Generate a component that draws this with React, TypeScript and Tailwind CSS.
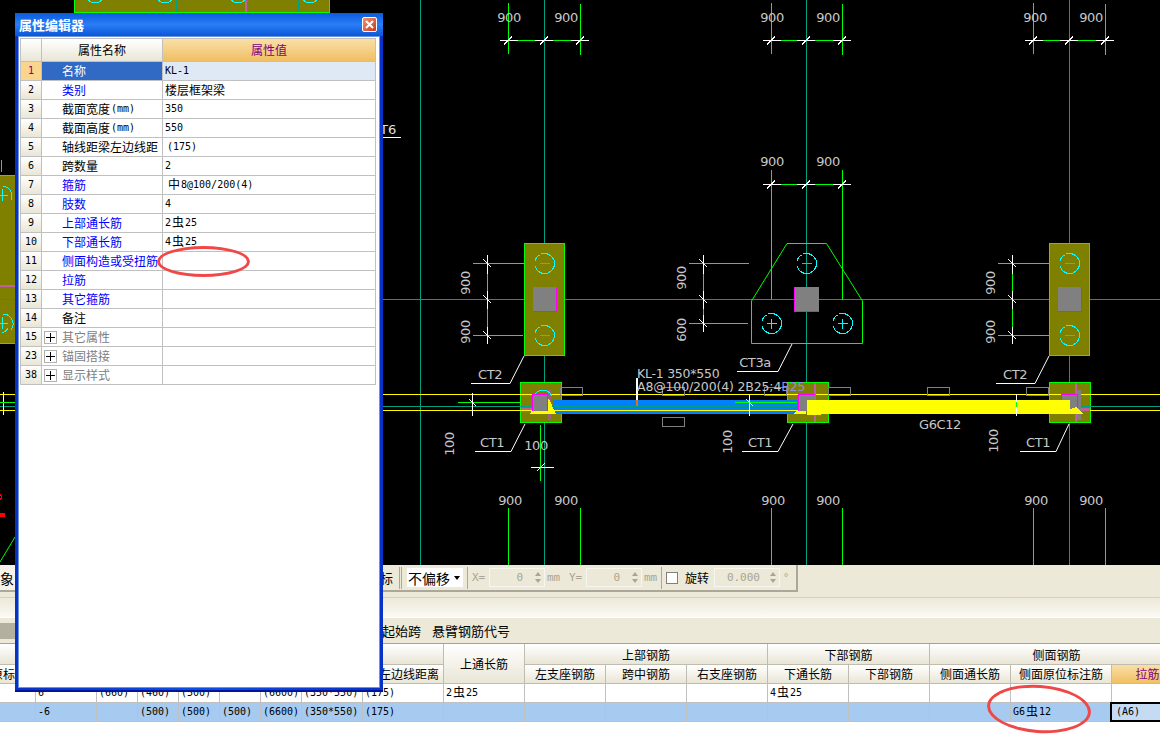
const mono = "font-['DejaVu_Sans_Mono','Noto_Sans_CJK_SC',monospace] text-[10px]";
const headBg = "bg-gradient-to-b from-[#ffffff] to-[#e9e6d6]";
const orangeBg = "bg-gradient-to-b from-[#f9dfa6] to-[#f0bf62]";

// 属性编辑器 rows
const rows = [
  { n: "1", name: "名称", value: "KL-1", sel: true },
  { n: "2", name: "类别", value: "楼层框架梁", blue: true, cjk: true },
  { n: "3", name: "截面宽度", unit: "(mm)", value: "350" },
  { n: "4", name: "截面高度", unit: "(mm)", value: "550" },
  { n: "5", name: "轴线距梁左边线距", value: "(175)", indent: true },
  { n: "6", name: "跨数量", value: "2" },
  { n: "7", name: "箍筋", value: "中8@100/200(4)", blue: true, indent: true },
  { n: "8", name: "肢数", value: "4", blue: true },
  { n: "9", name: "上部通长筋", value: "2虫25", blue: true },
  { n: "10", name: "下部通长筋", value: "4虫25", blue: true },
  { n: "11", name: "侧面构造或受扭筋", value: "", blue: true },
  { n: "12", name: "拉筋", value: "", blue: true },
  { n: "13", name: "其它箍筋", value: "", blue: true },
  { n: "14", name: "备注", value: "" },
  { n: "15", name: "其它属性", value: "", group: true },
  { n: "23", name: "锚固搭接", value: "", group: true },
  { n: "38", name: "显示样式", value: "", group: true },
];

const row1 = ["", "6", "(660)", "(460)", "(500)", "", "(6600)", "(350*550)", "(175)", "2虫25", "", "", "", "4虫25", "", "", "", ""];
const row2 = ["", "-6", "", "(500)", "(500)", "(500)", "(6600)", "(350*550)", "(175)", "", "", "", "", "", "", "", "G6虫12", ""];

// rebar grade glyphs sit a bit larger than the digits next to them
function Rebar({ text }: { text: string }) {
  const parts = text.split(/([中虫])/);
  return (
    <>
      {parts.map((p, i) =>
        p === "中" || p === "虫" ? (
          <span key={i} className="text-[12px] mx-[1px]">{p}</span>
        ) : (
          <span key={i}>{p}</span>
        ),
      )}
    </>
  );
}

function HDim({ y, xs }: { y: number; xs: number[] }) {
  return (
    <g>
      <line x1={xs[0] - 8} x2={xs[2] + 9} y1={y} y2={y} stroke="#fff" />
      <line x1={xs[0] + 10} x2={xs[1] - 9} y1={y} y2={y} stroke="#00ff00" />
      <line x1={xs[1] + 9} x2={xs[2] - 9} y1={y} y2={y} stroke="#00ff00" />
      {xs.map((x) => (
        <line key={x} x1={x - 4} y1={y + 4} x2={x + 4} y2={y - 4} stroke="#fff" />
      ))}
    </g>
  );
}

function VDim({ x, ys }: { x: number; ys: number[] }) {
  return (
    <g>
      <line x1={x} x2={x} y1={ys[0] - 9} y2={ys[2] + 8} stroke="#fff" />
      <line x1={x} x2={x} y1={ys[0] + 10} y2={ys[1] - 9} stroke="#00ff00" />
      <line x1={x} x2={x} y1={ys[1] + 9} y2={ys[2] - 9} stroke="#00ff00" />
      {ys.map((y) => (
        <line key={y} x1={x - 4} y1={y - 4} x2={x + 4} y2={y + 4} stroke="#fff" />
      ))}
    </g>
  );
}

function Label({ x, y, children, rotate }: { x: number; y: number; children: string; rotate?: boolean }) {
  return (
    <text
      x={x}
      y={y}
      textAnchor="middle"
      dominantBaseline="central"
      fill="#c8c8c8"
      fontSize={13}
      letterSpacing={-0.4}
      fontFamily="'DejaVu Sans', sans-serif"
      transform={rotate ? `rotate(-90 ${x} ${y})` : undefined}
    >
      {children}
    </text>
  );
}

function Bolt({ x, y, minus }: { x: number; y: number; minus?: boolean }) {
  return (
    <g>
      <path
        d={`M${x - 3} ${y - 9.5} A10 10 0 1 1 ${x - 9.5} ${y + 3} M${x - 9.5} ${y - 3} A10 10 0 0 1 ${x - 5} ${y - 8.6} M${x - 8} ${y + 6} A10 10 0 0 0 ${x - 3} ${y + 9.5}`}
        fill="none"
        stroke="#00ffff"
      />
      <line x1={x - 5} x2={x + 5} y1={y} y2={y} stroke={minus ? "#00d8a0" : "#00ffff"} />
      {!minus && <line x1={x} x2={x} y1={y - 5} y2={y + 5} stroke="#00ffff" />}
    </g>
  );
}

function Ct2({ x }: { x: number }) {
  return (
    <g>
      <rect x={x} y={243.5} width={40} height={112} fill="#808000" stroke="#00ff00" />
      <rect x={x + 8} y={287} width={24} height={24} fill="#808080" />
      <path d={`M${x + 32} 287 V311 H${x + 8}`} fill="none" stroke="#ff00ff" />
      <Bolt x={x + 20} y={263.5} minus />
      <Bolt x={x + 20} y={335.5} minus />
    </g>
  );
}

function Ct1({ x }: { x: number }) {
  return (
    <rect x={x} y={382.5} width={40.5} height={40} fill="#808000" stroke="#00ff00" />
  );
}

function CadCanvas() {
  const gridX = [420.5, 544.5, 806.5, 1069.5];
  const top = [[508, 544, 580], [771, 806, 842], [1033, 1069, 1105]];
  const labelsX = [[509, 566], [772, 828], [1035, 1091]];
  const boxes = [[560, 387], [662, 387], [764, 387], [828, 387], [927, 387], [1026, 387], [662, 417]];
  return (
    <svg width={1160} height={565} viewBox="0 0 1160 565" className="block bg-black" shapeRendering="crispEdges">
      {/* top-left footing, mostly under the dialog */}
      <rect x={74.5} y={-5} width={255} height={17.5} fill="#808000" stroke="#00ff00" />
      <line x1={176.5} x2={176.5} y1={0} y2={12} stroke="#00a080" />
      <line x1={245.5} x2={245.5} y1={0} y2={12} stroke="#c060a0" strokeWidth={2} />
      <line x1={298} x2={298} y1={0} y2={12} stroke="#00a080" />
      <path d="M88 0 A10 10 0 0 0 102 0 M158 0 A10 10 0 0 0 172 0 M231 0 A10 10 0 0 0 245 0 M303 0 A10 10 0 0 0 317 0" fill="none" stroke="#00ffff" />

      {/* left footing */}
      <rect x={-5} y={175.5} width={24} height={168} fill="#808000" stroke="#00ff00" />
      <rect x={0} y={285} width={20} height={2} fill="#c060a0" />
      <line x1={1.5} x2={1.5} y1={160} y2={172} stroke="#00ff00" />
      <path d="M3 186 A10 10 0 0 1 11 200 M3 314 A10 10 0 0 1 11 330 M8 328 A10 10 0 0 1 2 333" fill="none" stroke="#00ffff" />
      <path d="M-3 195 H8 M2 189 V201 M-3 323 H8 M2 317 V329" stroke="#00ffff" />

      {gridX.map((x) => (
        <line key={x} x1={x} x2={x} y1={0} y2={565} stroke="#00a080" />
      ))}
      <line x1={0} x2={1160} y1={299.5} y2={299.5} stroke="#00a080" />

      {top.map((xs, i) => (
        <g key={i}>
          <line x1={xs[0] + 0.5} x2={xs[0] + 0.5} y1={3} y2={54} stroke="#00ff00" />
          <line x1={xs[2] + 0.5} x2={xs[2] + 0.5} y1={4} y2={55} stroke="#00ff00" />
          <HDim y={40.5} xs={xs} />
          <Label x={labelsX[i][0]} y={17}>900</Label>
          <Label x={labelsX[i][1]} y={17}>900</Label>
          <line x1={xs[0] + 0.5} x2={xs[0] + 0.5} y1={508} y2={565} stroke="#00ff00" />
          <line x1={xs[2] + 0.5} x2={xs[2] + 0.5} y1={508} y2={565} stroke="#00ff00" />
          <Label x={labelsX[i][0] + 1} y={500}>900</Label>
          <Label x={labelsX[i][1]} y={500}>900</Label>
        </g>
      ))}

      {/* second dimension row above CT3a */}
      <line x1={771.5} x2={771.5} y1={170} y2={299} stroke="#00ff00" />
      <line x1={842.5} x2={842.5} y1={170} y2={300} stroke="#00ff00" />
      <HDim y={184.5} xs={[771, 806, 842]} />
      <Label x={772} y={161}>900</Label>
      <Label x={828} y={161}>900</Label>

      <Ct2 x={524.5} />
      <Ct2 x={1049.5} />

      {/* CT3a */}
      <path d="M787 243.5 H826.5 L862.5 301 V343.5 H751.5 V301 Z" fill="none" stroke="#00ff00" shapeRendering="auto" />
      <rect x={794} y={287} width={25} height={24} fill="#808080" />
      <path d="M794.5 287 V311 H819" fill="none" stroke="#ff00ff" />
      <Bolt x={806.5} y={263.5} minus />
      <Bolt x={771.5} y={323.5} />
      <Bolt x={842.5} y={323.5} />

      {/* vertical dims */}
      <line x1={473} x2={524} y1={263.5} y2={263.5} stroke="#00ff00" />
      <line x1={473} x2={523} y1={335.5} y2={335.5} stroke="#00ff00" />
      <VDim x={487.5} ys={[263.5, 299.5, 335.5]} />
      <Label x={465} y={283} rotate>900</Label>
      <Label x={465} y={332} rotate>900</Label>

      <line x1={689} x2={749} y1={263.5} y2={263.5} stroke="#00ff00" />
      <line x1={689} x2={748} y1={323.5} y2={323.5} stroke="#00ff00" />
      <VDim x={703.5} ys={[263.5, 299.5, 323.5]} />
      <Label x={681} y={278} rotate>900</Label>
      <Label x={681} y={330} rotate>600</Label>

      <line x1={998} x2={1049} y1={263.5} y2={263.5} stroke="#00ff00" />
      <line x1={998} x2={1049} y1={335.5} y2={335.5} stroke="#00ff00" />
      <VDim x={1012.5} ys={[263.5, 299.5, 335.5]} />
      <Label x={990} y={283} rotate>900</Label>
      <Label x={990} y={332} rotate>900</Label>

      {/* leaders */}
      <g fill="none" stroke="#fff" shapeRendering="auto">
        <path d="M524 356 L510 383.5 H471" />
        <path d="M525 424 L511 451.5 H475" />
        <path d="M792 344 L778 371.5 H737" />
        <path d="M793 424 L778 451.5 H742" />
        <path d="M1049 356 L1035 383.5 H996" />
        <path d="M1069 424 L1056 451.5 H1020" />
      </g>
      <Label x={490} y={374}>CT2</Label>
      <Label x={492} y={442}>CT1</Label>
      <Label x={755} y={362}>CT3a</Label>
      <Label x={760} y={442}>CT1</Label>
      <Label x={1015} y={374}>CT2</Label>
      <Label x={1038} y={442}>CT1</Label>

      <Ct1 x={520.5} />
      <Ct1 x={787.5} />
      <Ct1 x={1049.5} />

      {/* beams */}
      <rect x={553} y={400} width={247} height={14} fill="#0080ff" />
      <line x1={0} x2={1160} y1={406.5} y2={406.5} stroke="#00a080" />
      <line x1={0} x2={1160} y1={394.5} y2={394.5} stroke="#ffff00" />
      <line x1={0} x2={1160} y1={410.5} y2={410.5} stroke="#ffff00" />
      <rect x={1077} y={390} width={4} height={30} fill="#808080" />
      <rect x={548} y={390} width={3} height={30} fill="#a06080" />
      <rect x={814} y={383} width={2} height={39} fill="#c060a0" />
      <rect x={1075} y={383} width={2} height={39} fill="#c060a0" />
      <rect x={521} y={408} width={11} height={2} fill="#c06090" />
      <rect x={1081} y={408} width={9} height={3} fill="#c06090" />

      <polygon points="530,414 556,414 549,399 536,399" fill="#ffff00" />
      <path d="M534 396 A10 10 0 0 1 552 396" fill="none" stroke="#00ffff" />
      <rect x={532} y={394} width={16} height={17} fill="#808080" />
      <path d="M532.5 411 V394.5 H547.5 V411" fill="none" stroke="#ff00ff" />

      <polygon points="793,414 806,414 806,402" fill="#ffff00" />
      <rect x={799} y={394} width={16} height={17} fill="#808080" />
      <path d="M798.5 411 V394.5 H815" fill="none" stroke="#ff00ff" />
      <rect x={807} y={400} width={263} height={14} fill="#ffff00" />
      <rect x={807} y={414} width={14} height={1} fill="#ffff00" />

      <rect x={1061} y={394} width={17} height={17} fill="#808080" />
      <path d="M1061.5 411 V394.5 H1077.5 V411" fill="none" stroke="#ff00ff" />
      <polygon points="1055,414 1084,414 1076,407" fill="#ffff00" />
      <rect x={1049} y={400} width={21} height={14} fill="#ffff00" />

      {/* gray rebar tag boxes */}
      {boxes.map(([x, y]) => (
        <rect key={`${x}-${y}`} x={x + 0.5} y={y + 0.5} width={22} height={y === 417 ? 9 : 8} fill="none" stroke="#808080" />
      ))}

      {/* span marks */}
      <line x1={458} x2={520} y1={402.5} y2={402.5} stroke="#00ff00" />
      <line x1={472.5} x2={472.5} y1={393} y2={416} stroke="#fff" />
      <line x1={469} y1={399} x2={476} y2={406} stroke="#fff" />
      <line x1={735} x2={797} y1={402.5} y2={402.5} stroke="#00ff00" />
      <line x1={749.5} x2={749.5} y1={394} y2={416} stroke="#fff" />
      <line x1={746} y1={399} x2={753} y2={406} stroke="#fff" />
      <line x1={1016.5} x2={1016.5} y1={394} y2={416} stroke="#fff" />
      <line x1={1016.5} x2={1016.5} y1={402} y2={407} stroke="#00ff00" />
      <line x1={540.5} x2={540.5} y1={425} y2={481} stroke="#00ff00" />
      <line x1={531} x2={554} y1={467.5} y2={467.5} stroke="#fff" />
      <line x1={537} y1={471} x2={545} y2={463} stroke="#fff" />
      <Label x={536} y={445}>100</Label>
      <Label x={449} y={444} rotate>100</Label>
      <Label x={727} y={442} rotate>100</Label>
      <Label x={993} y={441} rotate>100</Label>

      {/* beam label */}
      <rect x={635.5} y={378} width={2} height={22} fill="#fff" />
      <rect x={635.5} y={400} width={2} height={6} fill="#e07020" />
      <text x={637} y={378} fill="#c8c8c8" fontSize={12.5} fontFamily="'DejaVu Sans', sans-serif" letterSpacing={-0.25}>KL-1 350*550</text>
      <text x={637} y={391} fill="#c8c8c8" fontSize={12.5} fontFamily="'DejaVu Sans', sans-serif" letterSpacing={-0.15}>A8@100/200(4) 2B25;4<tspan fill="#9090e0">B25</tspan></text>
      <Label x={940} y={424}>G6C12</Label>

      {/* T6 fragment and left-edge bits */}
      <text x={380} y={134} fill="#e0e0e0" fontSize={13} fontFamily="'DejaVu Sans', sans-serif">T6</text>
      <line x1={383} x2={401} y1={137.5} y2={137.5} stroke="#fff" />
      <line x1={3.5} x2={3.5} y1={392} y2={415} stroke="#fff" />
      <line x1={0} x2={15} y1={402.5} y2={402.5} stroke="#00ff00" />
      <path d="M0 494 L2 497 L0 500" fill="none" stroke="#ff0000" />
      <rect x={0} y={513} width={5} height={4} fill="#ff0000" />
      <line x1={0} y1={562} x2={15} y2={537} stroke="#00ff00" shapeRendering="auto" />
    </svg>
  );
}

function Spin({ w, value, decimal }: { w: string; value: string; decimal?: boolean }) {
  return (
    <div className={`${w} h-[19px] border border-[#f7f6ef] flex items-center justify-end text-[#a8a594] font-['DejaVu_Sans_Mono',monospace] text-[11px]`}>
      <span className={decimal ? "mr-[7px]" : "mr-[9px]"}>{value}</span>
      <div className="flex flex-col items-center gap-[3px] w-[11px] mr-[1px]">
        <span className="w-0 h-0 border-x-[3px] border-x-transparent border-b-[4px] border-b-[#a8a594]" />
        <span className="w-0 h-0 border-x-[3px] border-x-transparent border-t-[4px] border-t-[#a8a594]" />
      </div>
    </div>
  );
}

function Toolbar() {
  return (
    <div className="h-[33px] bg-[#ece9d8] border-b border-[#d4d0c0] shrink-0">
      <div className="h-[27px] w-[798px] flex items-center border-b-2 border-r-2 border-[#aca899] text-[12px] text-[#a8a594]">
        <div className="w-[40px] h-full flex items-center bg-[#f6f4ea] text-[14px] text-black">象</div>
        <span className="ml-[340px] text-[13px] text-black w-[11px]">标</span>
        <span className="ml-[8px] w-[3px] h-[22px] border-x border-[#aca899]" />
        <div className="ml-[5px] w-[56px] h-[19px] bg-white flex items-center text-[14px] text-black">
          <span className="pl-[1px] w-[46px]">不偏移</span>
          <span className="ml-[1px] w-0 h-0 border-x-[3px] border-x-transparent border-t-[4px] border-t-black" />
        </div>
        <span className="ml-[4px] w-px h-[22px] bg-[#aca899]" />
        <span className={`ml-[4px] w-[17px] ${mono} text-[11px]`}>X=</span>
        <Spin w="w-[56px]" value="0" />
        <span className={`ml-[2px] w-[22px] ${mono} text-[11px]`}>mm</span>
        <span className={`w-[17px] ${mono} text-[11px]`}>Y=</span>
        <Spin w="w-[56px]" value="0" />
        <span className={`ml-[2px] w-[17px] ${mono} text-[11px]`}>mm</span>
        <span className="w-px h-[22px] bg-[#aca899]" />
        <span className="ml-[4px] w-[12px] h-[12px] bg-white border border-[#7f7f7f]" />
        <span className="ml-[7px] w-[29px] text-[12px] text-black">旋转</span>
        <Spin w="w-[66px]" value="0.000" decimal />
        <span className={`ml-[3px] ${mono}`}>°</span>
      </div>
    </div>
  );
}

function BottomTable() {
  const grid = "grid grid-cols-[36px_61px_41px_41px_41px_41px_41px_61px_81px_81px_81px_81px_81px_81px_81px_81px_101px_72px]";
  const cell = "border-r border-b border-[#c0bdb0] flex items-center justify-center whitespace-nowrap overflow-hidden";
  const sub = ["左支座钢筋", "跨中钢筋", "右支座钢筋", "下通长筋", "下部钢筋", "侧面通长筋", "侧面原位标注筋"];
  return (
    <div className="flex-1 bg-white overflow-hidden">
      <div className={`${grid} h-[41px] text-[12px] text-black border-t border-[#8fa5bd] grid-rows-[21px_19px]`}>
        <div className={`${cell} ${headBg} col-span-8 row-start-2 col-start-1 justify-start`}><span className="-ml-[9px]">原标</span></div>
        <div className={`${cell} ${headBg} col-span-8 row-start-1 col-start-1`} />
        <div className={`${cell} ${headBg} row-start-2 col-start-9 justify-end pr-[4px]`}>左边线距离</div>
        <div className={`${cell} ${headBg} row-start-1 col-start-9`} />
        <div className={`${cell} ${headBg} row-span-2 row-start-1 col-start-10`}>上通长筋</div>
        <div className={`${cell} ${headBg} col-span-3 row-start-1 col-start-11 pt-px`}>上部钢筋</div>
        <div className={`${cell} ${headBg} col-span-2 row-start-1 col-start-14 pt-px`}>下部钢筋</div>
        <div className={`${cell} ${headBg} col-span-3 row-start-1 col-start-16 pt-px`}>侧面钢筋</div>
        {sub.map((t, i) => (
          <div key={t + i} className={`${cell} ${headBg} row-start-2`}>{t}</div>
        ))}
        <div className={`${cell} ${orangeBg} row-start-2 text-[#800080]`}>拉筋</div>
      </div>
      <div className={`${grid} h-[19px] ${mono} text-black`}>
        {row1.map((t, i) => (
          <div key={i} className="border-r border-b border-[#c0c0c0] flex items-center pl-[2px] whitespace-nowrap overflow-hidden"><Rebar text={t} /></div>
        ))}
      </div>
      <div className={`${grid} h-[19px] ${mono} text-black bg-[#a6caf0]`}>
        {row2.map((t, i) => (
          <div key={i} className="border-r border-b border-[#c0c0c0] flex items-center pl-[2px] whitespace-nowrap overflow-hidden"><Rebar text={t} /></div>
        ))}
      </div>
    </div>
  );
}

function PropertyDialog() {
  return (
    <div className="absolute left-[15px] top-[13px] w-[368px] h-[679px] flex flex-col bg-gradient-to-r from-[#0831c8] via-[#0a50e8] to-[#0831c8] border-b-2 border-[#00139a] rounded-t-[3px]">
      <div className="h-[23px] shrink-0 flex items-center justify-between pl-[4px] pr-[6px] bg-gradient-to-b from-[#0a5ae0] via-[#2a7df5] to-[#0a56d8]">
        <span className="text-[13px] font-bold text-white">属性编辑器</span>
        <div className="w-[15px] h-[15px] rounded-[2px] border border-white bg-gradient-to-br from-[#f09070] to-[#d03010] flex items-center justify-center">
          <svg width="9" height="9" viewBox="0 0 9 9">
            <path d="M1 1 L8 8 M8 1 L1 8" stroke="#fff" strokeWidth="2" />
          </svg>
        </div>
      </div>
      <div className="flex-1 mx-[3px] mb-[2px] border border-[#6d93d8] bg-white pt-[1px] pl-[1px]">
        <div className="w-[356px] border-l border-r border-[#c0c0c0]">
          <div className="flex h-[24px] text-[12px] border-t border-b border-[#c0c0c0]">
            <div className={`w-[21px] border-r border-[#c0c0c0] ${headBg}`} />
            <div className={`w-[121px] border-r border-[#c0c0c0] ${headBg} flex items-center justify-center text-black pb-px`}>属性名称</div>
            <div className={`flex-1 ${orangeBg} flex items-center justify-center text-[#800080] pb-px`}>属性值</div>
          </div>
          {rows.map((r) => (
            <div key={r.n} className="flex h-[19px] border-b border-[#c0c0c0] text-[12px]">
              <div className={`w-[21px] border-r border-[#c0c0c0] flex items-center justify-center ${mono} ${r.sel ? "bg-[#fbd58e] text-[#800080]" : `${headBg} text-black`}`}>{r.n}</div>
              <div className={`w-[121px] border-r border-[#c0c0c0] flex items-center whitespace-nowrap overflow-hidden ${r.group ? "pl-[2px]" : "pl-[20px]"} ${r.sel ? "bg-[#316ac5] text-white" : r.group ? "text-[#808080]" : r.blue ? "text-[#0000ff]" : "text-black"}`}>
                {r.group && (
                  <span className="w-[13px] h-[13px] mr-[5px] border border-[#b0b0b0] flex items-center justify-center text-black">
                    <svg width="9" height="9" viewBox="0 0 9 9"><path d="M0 4.5 H9 M4.5 0 V9" stroke="#000" /></svg>
                  </span>
                )}
                {r.name}
                {r.unit && <span className={`ml-[1px] ${mono} text-[9px]`}>{r.unit}</span>}
              </div>
              <div className={`flex-1 flex items-center ${r.indent ? "pl-[4px]" : "pl-[2px]"} whitespace-pre ${r.cjk ? "" : mono} ${r.sel ? "bg-[#dfe8f5]" : ""} text-black`}><Rebar text={r.value} /></div>
            </div>
          ))}
        </div>
      </div>
    </div>
  );
}

export default function App() {
  return (
    <div className="relative w-[1160px] h-[735px] overflow-hidden flex flex-col bg-[#ece9d8] font-['Noto_Sans_CJK_SC',sans-serif] leading-none">
      <CadCanvas />
      <Toolbar />
      <div className="h-[20px] shrink-0 bg-gradient-to-b from-[#ece9d8] to-[#fbfaf5] border-b border-white" />
      <div className="h-[25px] shrink-0 bg-[#ece9d8] flex items-center text-[13px] text-black">
        <div className="w-[15px] h-[16px] bg-[#b4b0a0]" />
        <span className="ml-[367px]">起始跨</span>
        <span className="ml-[11px]">悬臂钢筋代号</span>
      </div>
      <BottomTable />
      <PropertyDialog />
      {/* selected cell and the red hand-drawn rings lie over everything */}
      <div className={`absolute left-[1110px] top-[702px] w-[60px] h-[20px] border-2 border-black bg-[#c5daf3] ${mono} flex items-center pl-[4px] text-black`}>(A6)</div>
      <div className="absolute left-[157px] top-[246px] w-[93px] h-[31px] rounded-[50%] border-[3px] border-[#f04848]" />
      <div className="absolute left-[987px] top-[685px] w-[104px] h-[48px] rounded-[50%] border-[3px] border-[#f04848] rotate-[4deg]" />
    </div>
  );
}
